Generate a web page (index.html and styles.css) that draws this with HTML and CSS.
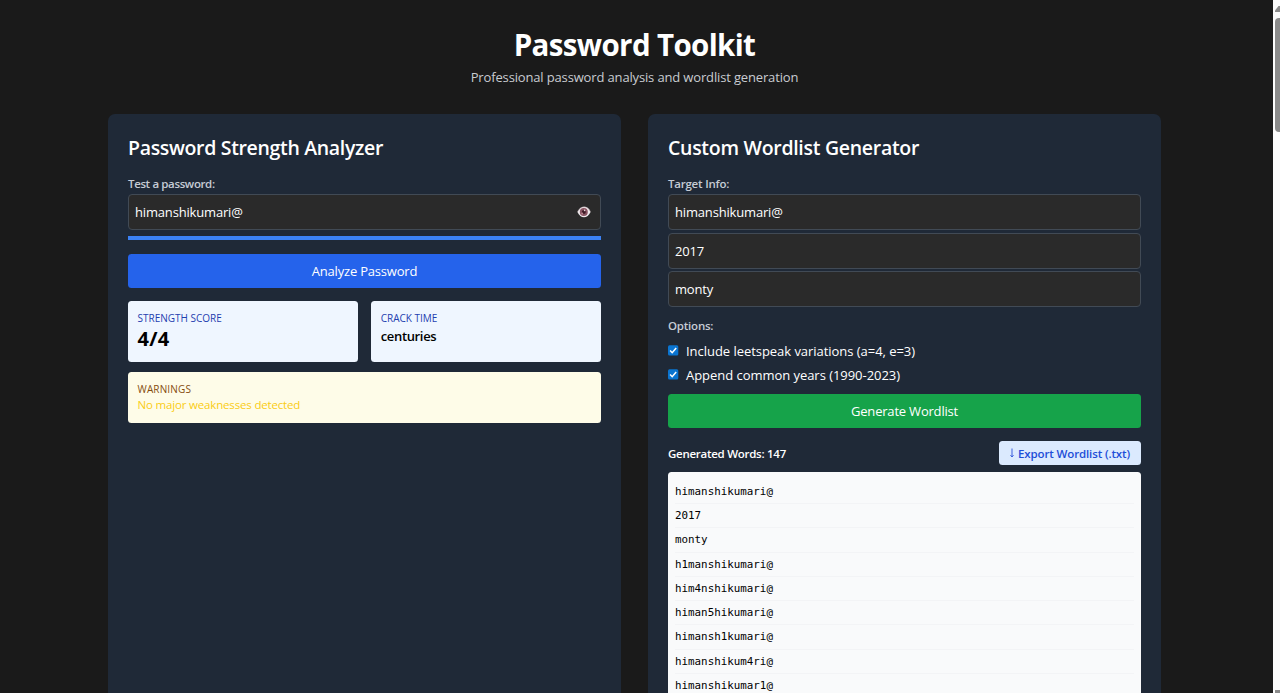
FILE: index.html
```html
<!DOCTYPE html>
<html lang="en">
<head>
<meta charset="utf-8">
<title>Password Toolkit</title>
<link rel="stylesheet" href="styles.css">
</head>
<body>
<div class="page">
  <header class="header">
    <h1 class="title">Password Toolkit</h1>
    <p class="subtitle">Professional password analysis and wordlist generation</p>
  </header>
  <main class="columns">
    <section class="card">
      <h2 class="heading heading-analyzer">Password Strength Analyzer</h2>
      <div class="label label-test">Test a password:</div>
      <div class="field">
        <span class="value">himanshikumari@</span>
        <svg class="eye" viewBox="0 0 14 12" width="14" height="12">
          <path d="M.4 6C2 2.500 4.500.8 7.200.8S12.200 2.600 13.600 6C12 9.600 9.600 11.200 7 11.200S2 9.600.4 6z" fill="#eee9ec"/>
          <path d="M.6 5.600C2.300 2.500 4.500 1 7.200 1S12 2.500 13.400 5.600" fill="none" stroke="#c3aeb5" stroke-width=".5"/>
          <circle cx="6.800" cy="6" r="4" fill="#8a5563"/>
          <circle cx="6.800" cy="6" r="2" fill="#3d1a25"/>
          <circle cx="5.200" cy="7.400" r="1" fill="#b98590"/>
          <circle cx="7.600" cy="4.400" r=".8" fill="#e9d5da"/>
        </svg>
      </div>
      <div class="meter"></div>
      <div class="button button-blue"><span class="button-text">Analyze Password</span></div>
      <div class="stats">
        <div class="stat">
          <div class="stat-label">STRENGTH SCORE</div>
          <div class="score">4/4</div>
        </div>
        <div class="stat">
          <div class="stat-label">CRACK TIME</div>
          <div class="crack">centuries</div>
        </div>
      </div>
      <div class="warning">
        <div class="warning-label">WARNINGS</div>
        <div class="warning-text">No major weaknesses detected</div>
      </div>
    </section>
    <section class="card">
      <h2 class="heading heading-generator">Custom Wordlist Generator</h2>
      <div class="label label-target">Target Info:</div>
      <div class="fields">
        <div class="field"><span class="value">himanshikumari@</span></div>
        <div class="field"><span class="value">2017</span></div>
        <div class="field"><span class="value">monty</span></div>
      </div>
      <div class="label label-options">Options:</div>
      <div class="option">
        <svg class="check" viewBox="0 0 11 11" width="11" height="11"><rect x="0" y=".2" width="10.300" height="10.300" rx="1.500" fill="#0a74d0"/><path d="M2.100 5.500L4.200 7.700 8.200 2.900" fill="none" stroke="#fff" stroke-width="1.500"/></svg>
        <span class="option-text">Include leetspeak variations (a=4, e=3)</span>
      </div>
      <div class="option">
        <svg class="check" viewBox="0 0 11 11" width="11" height="11"><rect x="0" y=".2" width="10.300" height="10.300" rx="1.500" fill="#0a74d0"/><path d="M2.100 5.500L4.200 7.700 8.200 2.900" fill="none" stroke="#fff" stroke-width="1.500"/></svg>
        <span class="option-text">Append common years (1990-2023)</span>
      </div>
      <div class="button button-green"><span class="button-text">Generate Wordlist</span></div>
      <div class="results-bar">
        <span class="count">Generated Words: 147</span>
        <span class="export"><svg class="arrow" viewBox="0 0 6 10" width="6" height="10"><path d="M3 .5V9M1.500 7.200L3 9 4.500 7.200" fill="none" stroke="#3a5fdd" stroke-width="1"/></svg><span>Export Wordlist (.txt)</span></span>
      </div>
      <div class="words">
        <div class="word">himanshikumari@</div>
        <div class="word">2017</div>
        <div class="word">monty</div>
        <div class="word">h1manshikumari@</div>
        <div class="word">him4nshikumari@</div>
        <div class="word">himan5hikumari@</div>
        <div class="word">himansh1kumari@</div>
        <div class="word">himanshikum4ri@</div>
        <div class="word word-last">himanshikumar1@</div>
      </div>
    </section>
  </main>
</div>
<div class="scrollbar">
  <svg class="scroll-up" viewBox="0 0 5 6" width="5" height="6"><path d="M0 6V4.500L3.500 0H5V6z" fill="#8b8b8b"/></svg>
  <div class="thumb"></div>
  <div class="scroll-down"></div>
</div>
</body>
</html>
```
FILE: styles.css
```css
* { box-sizing: border-box; }
body {
  margin: 0;
  height: 693px;
  display: flex;
  overflow: hidden;
  background: #1a1a1a;
  color: #fff;
  font-family: "Open Sans", "Noto Sans", sans-serif;
  font-size: 13px;
}
.page {
  flex: 1;
  height: 693px;
  padding: 27px 112px 0 108px;
  display: flex;
  flex-direction: column;
}
.header { text-align: center; white-space: nowrap; }
.title { margin: 0; font-size: 29.500px; line-height: 36px; font-weight: 700; letter-spacing: -.63px; }
.subtitle { margin: 4px 0 0; line-height: 20px; color: #c9ccd1; letter-spacing: -.15px; }
.columns {
  flex: 1;
  min-height: 0;
  display: grid;
  grid-template-columns: 1fr 1fr;
  grid-template-rows: minmax(0, 1fr);
  gap: 27px;
  margin-top: 26.500px;
  white-space: nowrap;
}
.card { padding: 20px 20px 0; border-radius: 7px 7px 0 0; background: #1f2937; display: flex; flex-direction: column; }
.card > * { flex-shrink: 0; }
.heading { margin: 0; height: 28px; font-size: 19.500px; line-height: 28.800px; font-weight: 600; }
.heading-analyzer { letter-spacing: -.33px; }
.heading-generator { letter-spacing: -.29px; }
.label { margin-top: 13px; height: 19.500px; line-height: 18px; font-size: 11.500px; font-weight: 600; color: #c6ccd5; letter-spacing: -.22px; }
.label-test { letter-spacing: -.37px; }
.field {
  height: 36px;
  padding: 0 9px 0 6px;
  display: flex;
  align-items: center;
  justify-content: space-between;
  border: 1px solid #414a55;
  border-radius: 4px;
  background: #2a2a2a;
}
.value { letter-spacing: -.17px; }
.fields { display: grid; gap: 2.500px; }
.meter { height: 4px; margin-top: 6px; background: #3b82f6; }
.button { height: 34px; display: flex; align-items: center; justify-content: center; border-radius: 3.500px; }
.button-text { letter-spacing: -.2px; }
.button-blue { margin-top: 14px; background: #2563eb; }
.button-green { margin-top: 6.500px; background: #16a34a; }
.stats { display: grid; grid-template-columns: 1fr 1fr; gap: 13.500px; margin-top: 13px; }
.stat { height: 61px; padding: 9px 9.500px; border-radius: 3.500px; background: #eff6ff; color: #000; }
.stat-label { font-size: 10px; line-height: 17px; font-weight: 500; color: #1e40af; }
.score { font-size: 20px; line-height: 24px; font-weight: 700; letter-spacing: .3px; }
.crack { font-size: 13px; line-height: 18px; font-weight: 600; letter-spacing: -.35px; }
.warning { height: 50.500px; margin-top: 10px; padding: 9px 9.500px; border-radius: 3.500px; background: #fefce8; }
.warning-label { font-size: 10px; line-height: 16px; font-weight: 500; color: #854d0e; letter-spacing: .15px; }
.warning-text { font-size: 11.500px; line-height: 16px; color: #facc15; letter-spacing: -.17px; }
.label-options { margin-top: 10px; height: 22px; }
.option { display: flex; align-items: center; gap: 7px; height: 24px; }
.option-text { letter-spacing: -.04px; }
.check { margin-top: -2px; }
.results-bar { display: flex; align-items: center; justify-content: space-between; height: 24px; margin-top: 13.500px; }
.count { font-size: 11.500px; font-weight: 600; letter-spacing: -.27px; }
.export {
  width: 142px;
  height: 24px;
  padding-left: 10px;
  display: flex;
  align-items: center;
  gap: 3px;
  border-radius: 3.500px;
  background: #dbeafe;
  color: #1d4ed8;
  font-size: 11.500px;
  font-weight: 600;
  letter-spacing: -.13px;
}
.card > .words { flex: 1 1 0; min-height: 0; margin-top: 6.500px; padding: 8.200px 7px 0; border-radius: 3.500px 3.500px 0 0; background: #f9fafb; color: #000; overflow: hidden; }
.word {
  height: 24.300px;
  line-height: 24px;
  border-bottom: 1px solid #f3f4f6;
  font-family: "DejaVu Sans Mono", monospace;
  font-size: 10.850px;
}
.word-last { height: 18px; border-bottom: 0; }
.scrollbar { width: 7px; padding: 6px 0 0 2px; background: #fcfcfc; display: flex; flex-direction: column; overflow: hidden; }
.scroll-up { display: block; }
.thumb { width: 5px; height: 114px; margin-top: 6px; border-radius: 4px 0 0 4px; background: #8b8b8b; }
.scroll-down { width: 5px; height: 3px; margin-top: auto; background: #8b8b8b; }
```
